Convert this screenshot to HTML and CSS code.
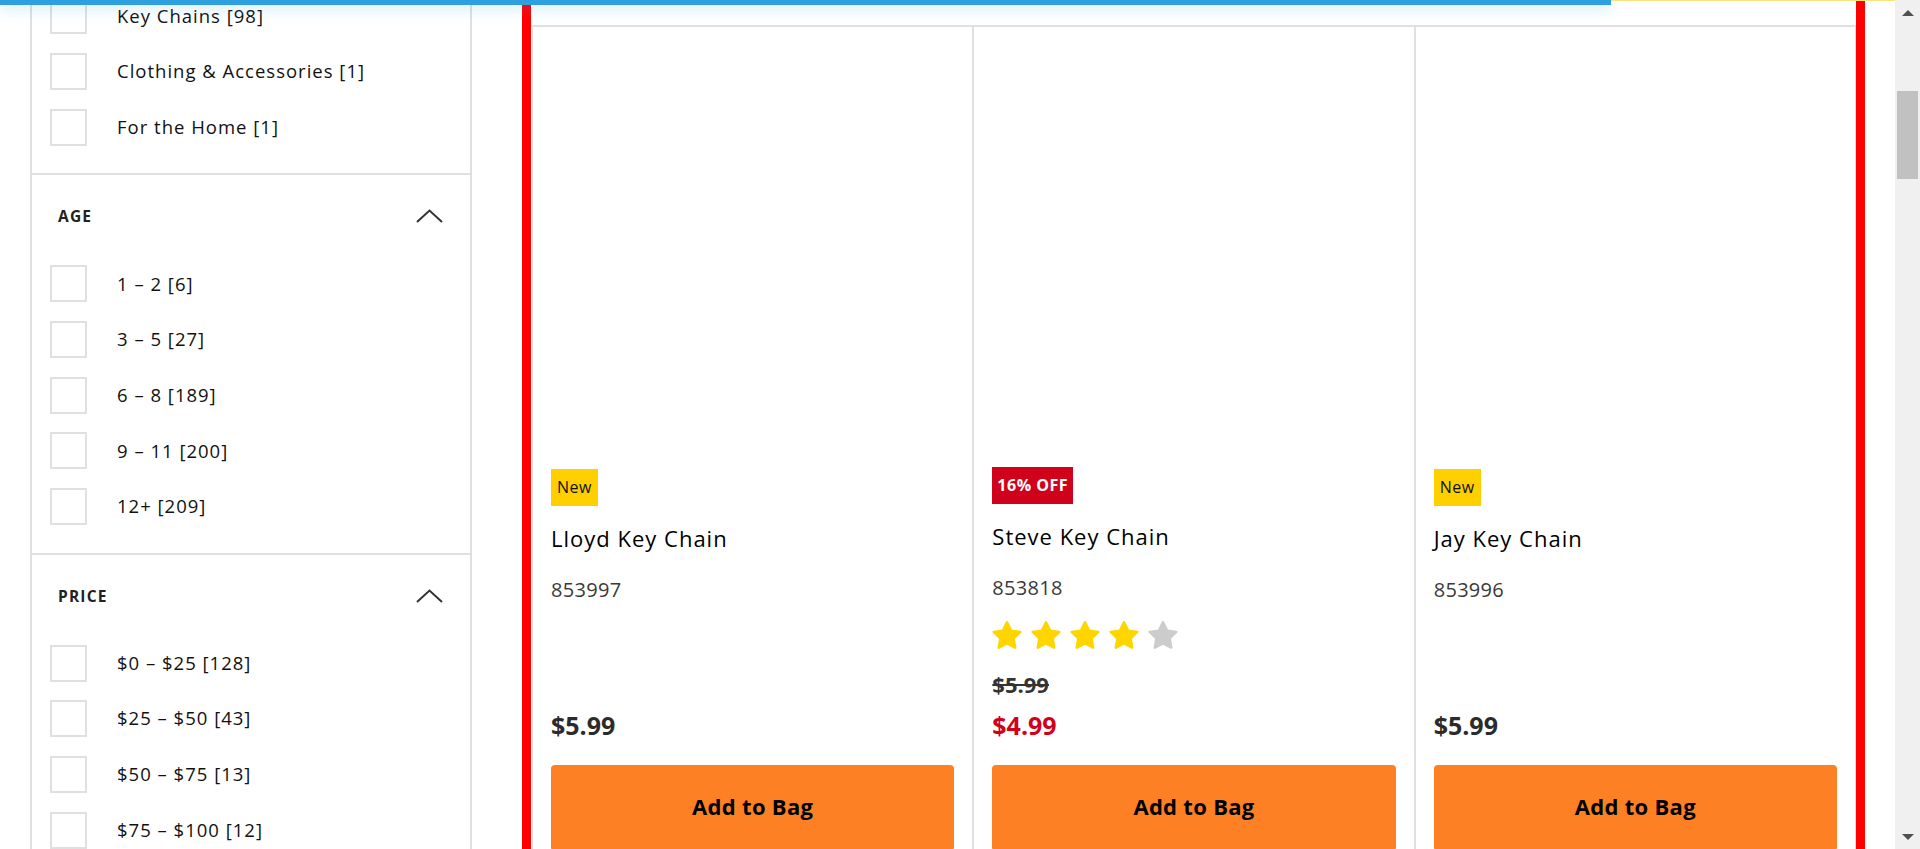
FILE: index.html
```html
<!DOCTYPE html>
<html lang="en">
<head>
<meta charset="utf-8">
<title>Key Chains</title>
<link rel="stylesheet" href="styles.css">
</head>
<body>
<div class="progress"><div class="progress-bar"></div></div>

<aside class="filters">
  <section class="facet facet-first">
    <ul class="opts">
      <li class="opt"><span class="box"></span><span>Key Chains [98]</span></li>
      <li class="opt"><span class="box"></span><span>Clothing &amp; Accessories [1]</span></li>
      <li class="opt"><span class="box"></span><span>For the Home [1]</span></li>
    </ul>
  </section>
  <section class="facet">
    <div class="facet-head"><span>AGE</span><svg viewBox="0 0 27 14" aria-hidden="true"><polyline points="1,13 13.5,1.5 26,13"/></svg></div>
    <ul class="opts">
      <li class="opt"><span class="box"></span><span>1 – 2 [6]</span></li>
      <li class="opt"><span class="box"></span><span>3 – 5 [27]</span></li>
      <li class="opt"><span class="box"></span><span>6 – 8 [189]</span></li>
      <li class="opt"><span class="box"></span><span>9 – 11 [200]</span></li>
      <li class="opt"><span class="box"></span><span>12+ [209]</span></li>
    </ul>
  </section>
  <section class="facet">
    <div class="facet-head"><span>PRICE</span><svg viewBox="0 0 27 14" aria-hidden="true"><polyline points="1,13 13.5,1.5 26,13"/></svg></div>
    <ul class="opts">
      <li class="opt"><span class="box"></span><span>$0 – $25 [128]</span></li>
      <li class="opt"><span class="box"></span><span>$25 – $50 [43]</span></li>
      <li class="opt"><span class="box"></span><span>$50 – $75 [13]</span></li>
      <li class="opt"><span class="box"></span><span>$75 – $100 [12]</span></li>
    </ul>
  </section>
</aside>

<main class="results">
  <div class="toolbar"></div>
  <div class="grid">
    <article class="card">
      <div class="thumb"></div>
      <span class="badge badge-new">New</span>
      <h3 class="title">Lloyd Key Chain</h3>
      <div class="sku">853997</div>
      <div class="buy">
        <div class="price">$5.99</div>
        <button class="add">Add to Bag</button>
      </div>
    </article>
    <article class="card">
      <div class="thumb"></div>
      <span class="badge badge-sale">16% OFF</span>
      <h3 class="title">Steve Key Chain</h3>
      <div class="sku">853818</div>
      <div class="stars">
        <svg class="star on" viewBox="0 0 30 30"><polygon points="15,2.3 19.11,10.64 28.31,11.97 21.66,18.46 23.23,27.63 15,23.3 6.77,27.63 8.34,18.46 1.69,11.97 10.89,10.64"/></svg>
        <svg class="star on" viewBox="0 0 30 30"><polygon points="15,2.3 19.11,10.64 28.31,11.97 21.66,18.46 23.23,27.63 15,23.3 6.77,27.63 8.34,18.46 1.69,11.97 10.89,10.64"/></svg>
        <svg class="star on" viewBox="0 0 30 30"><polygon points="15,2.3 19.11,10.64 28.31,11.97 21.66,18.46 23.23,27.63 15,23.3 6.77,27.63 8.34,18.46 1.69,11.97 10.89,10.64"/></svg>
        <svg class="star on" viewBox="0 0 30 30"><polygon points="15,2.3 19.11,10.64 28.31,11.97 21.66,18.46 23.23,27.63 15,23.3 6.77,27.63 8.34,18.46 1.69,11.97 10.89,10.64"/></svg>
        <svg class="star off" viewBox="0 0 30 30"><polygon points="15,2.3 19.11,10.64 28.31,11.97 21.66,18.46 23.23,27.63 15,23.3 6.77,27.63 8.34,18.46 1.69,11.97 10.89,10.64"/></svg>
      </div>
      <div class="buy">
        <div class="was">$5.99</div>
        <div class="price sale">$4.99</div>
        <button class="add">Add to Bag</button>
      </div>
    </article>
    <article class="card">
      <div class="thumb"></div>
      <span class="badge badge-new">New</span>
      <h3 class="title">Jay Key Chain</h3>
      <div class="sku">853996</div>
      <div class="buy">
        <div class="price">$5.99</div>
        <button class="add">Add to Bag</button>
      </div>
    </article>
  </div>
</main>

<div class="scrollbar">
  <div class="sb-btn"><span class="sb-up"></span></div>
  <div class="sb-track"><div class="sb-thumb"></div></div>
  <div class="sb-btn"><span class="sb-down"></span></div>
</div>
</body>
</html>
```

FILE: styles.css
```css
* { box-sizing: border-box; }

html, body {
  margin: 0;
  padding: 0;
  height: 849px;
  overflow: hidden;
}

body {
  display: flex;
  font-family: "Open Sans", "Noto Sans", sans-serif;
  color: #111;
  background: #fff;
}

/* top loading bar */
.progress {
  position: fixed;
  top: 0;
  left: 0;
  width: 1895px;
  height: 1px;
  background: #fbe27f;
  z-index: 10;
}
.progress-bar {
  width: 1611px;
  height: 5px;
  background: #2fa0df;
  box-shadow: 0 3px 14px rgba(47, 160, 223, 0.35);
}

/* sidebar filters */
.filters {
  flex: none;
  margin-left: 30px;
  width: 442px;
  border-left: 2px solid #e0e0e0;
  border-right: 2px solid #e0e0e0;
}
.facet { border-bottom: 2px solid #e0e0e0; }
.facet-head {
  height: 82px;
  display: flex;
  align-items: center;
  justify-content: space-between;
  padding: 0 27px 0 26px;
  font-size: 15.5px;
  font-weight: 700;
  letter-spacing: 1.2px;
  color: #222;
}
.facet-head svg {
  width: 27px;
  height: 14px;
  fill: none;
  stroke: #333;
  stroke-width: 2;
}
.opts {
  list-style: none;
  margin: 8px 0 0;
  padding: 0 18px 27.5px;
  display: flex;
  flex-direction: column;
  gap: 18.7px;
}
.facet-first .opts { margin-top: -2.6px; }
.opt {
  display: flex;
  align-items: center;
  gap: 30px;
  height: 37px;
  font-size: 18.5px;
  font-weight: 500;
  line-height: 1;
  letter-spacing: 1px;
  color: #111;
}
.box {
  flex: none;
  width: 37px;
  height: 37px;
  border: 2px solid #e0e0e0;
  background: #fff;
}

/* product results */
.results {
  flex: none;
  margin-left: 50px;
  width: 1343px;
  border-left: 9px solid #ff0000;
  border-right: 9px solid #ff0000;
}
.toolbar {
  height: 26px;
  border-bottom: 1px solid #e0e0e0;
}
.grid {
  display: grid;
  grid-template-columns: repeat(3, 1fr);
  padding-left: 1px;
}
.card {
  border: 1px solid #e0e0e0;
  padding: 0 18px 18px;
  display: flex;
  flex-direction: column;
  align-items: flex-start;
}
.thumb {
  align-self: stretch;
  height: 442px;
}
.badge {
  height: 37px;
  line-height: 37px;
  padding: 0 6px;
  font-size: 16px;
  letter-spacing: 0.5px;
}
.badge-new { background: #ffcf00; color: #111; }
.badge-sale {
  background: #d0021b;
  color: #fff;
  font-weight: 700;
  padding: 0 5px;
  margin-top: -2px;
}
.title {
  margin: 18px 0 0;
  font-size: 22px;
  line-height: 28px;
  font-weight: 500;
  letter-spacing: 1px;
  color: #000;
}
.sku {
  margin-top: 25px;
  font-size: 20px;
  line-height: 26px;
  font-weight: 400;
  letter-spacing: 0.3px;
  color: #3a3a3a;
}
.stars {
  margin-top: 18.8px;
  display: flex;
  gap: 9px;
}
.star {
  display: block;
  width: 30px;
  height: 30px;
  stroke-width: 2.5;
  stroke-linejoin: round;
}
.star.on { fill: #ffd500; stroke: #ffd500; }
.star.off { fill: #cccccc; stroke: #cccccc; }

.buy {
  margin-top: auto;
  align-self: stretch;
}
.was {
  margin-top: 20px;
  font-size: 22px;
  line-height: 28px;
  font-weight: 700;
  color: #333;
  text-decoration: line-through;
}
.price {
  font-size: 25px;
  line-height: 30px;
  font-weight: 700;
  color: #2b2b2b;
}
.was + .price { margin-top: 12.5px; }
.price.sale { color: #d0021b; }
.add {
  display: block;
  margin-top: 24.7px;
  width: 100%;
  height: 86px;
  padding: 0 0 4px;
  border: 0;
  border-radius: 4px;
  background: #fd8024;
  font-family: "Open Sans", "Noto Sans", sans-serif;
  font-size: 22px;
  font-weight: 700;
  letter-spacing: 0.3px;
  color: #000;
}

/* window scrollbar */
.scrollbar {
  flex: none;
  margin-left: auto;
  width: 25px;
  background: #f0f0f0;
  display: flex;
  flex-direction: column;
}
.sb-btn {
  height: 25px;
  display: flex;
  align-items: center;
  justify-content: center;
}
.sb-up {
  width: 0;
  height: 0;
  border-left: 6px solid transparent;
  border-right: 6px solid transparent;
  border-bottom: 6px solid #505050;
}
.sb-down {
  width: 0;
  height: 0;
  border-left: 6px solid transparent;
  border-right: 6px solid transparent;
  border-top: 6px solid #505050;
}
.sb-track {
  flex: 1;
  padding: 0 2px;
}
.sb-thumb {
  margin-top: 66px;
  height: 88px;
  background: #c1c1c1;
}
```
